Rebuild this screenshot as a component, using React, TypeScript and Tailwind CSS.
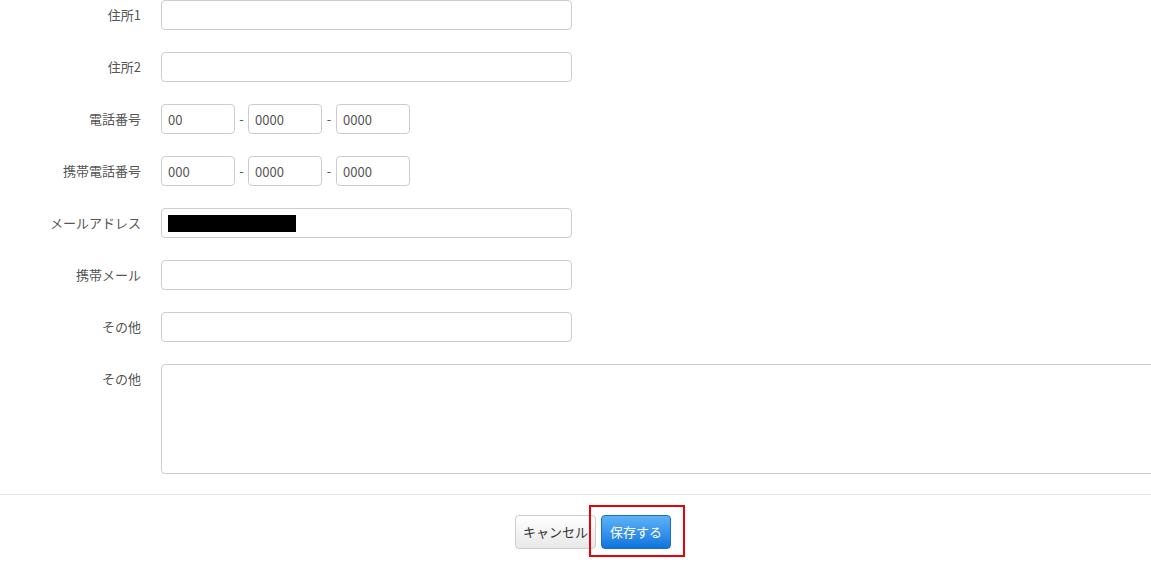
const FONT = { fontFamily: '"Noto Sans CJK JP", "Liberation Sans", sans-serif' };

const inputCls =
  "h-[30px] border border-[#ccc] rounded-[4px] bg-white px-[6px] text-[13px] text-[#555] outline-none";

function Row({ label, children, top }: { label: string; children: React.ReactNode; top?: boolean }) {
  return (
    <div className={"flex " + (top ? "items-start" : "items-center")}>
      <label className="w-[141px] h-[30px] flex items-center justify-end text-[13px] text-[#555] shrink-0">
        {label}
      </label>
      <div className="ml-[20px] flex items-center">{children}</div>
    </div>
  );
}

function Phone({ parts }: { parts: string[] }) {
  return (
    <>
      {parts.map((p, i) => (
        <div key={i} className="flex items-center">
          {i > 0 && (
            <span className={(i === 1 ? "w-[13px]" : "w-[14px]") + " text-center text-[13px] text-[#555]"}>-</span>
          )}
          <input defaultValue={p} className={inputCls + " w-[74px]"} />
        </div>
      ))}
    </>
  );
}

export default function App() {
  return (
    <div className="w-[1151px] h-[579px] overflow-hidden bg-white" style={FONT}>
      <div className="flex flex-col gap-[22px]">
        <Row label="住所1">
          <input className={inputCls + " w-[411px]"} />
        </Row>
        <Row label="住所2">
          <input className={inputCls + " w-[411px]"} />
        </Row>
        <Row label="電話番号">
          <Phone parts={["00", "0000", "0000"]} />
        </Row>
        <Row label="携帯電話番号">
          <Phone parts={["000", "0000", "0000"]} />
        </Row>
        <Row label="メールアドレス">
          <div className={inputCls + " w-[411px] flex items-center"}>
            <div className="w-[128px] h-[17px] bg-black" />
          </div>
        </Row>
        <Row label="携帯メール">
          <input className={inputCls + " w-[411px]"} />
        </Row>
        <Row label="その他">
          <input className={inputCls + " w-[411px]"} />
        </Row>
        <Row label="その他" top>
          <textarea className="h-[110px] w-[1010px] border border-[#ccc] rounded-[4px] bg-white resize-none outline-none" />
        </Row>
      </div>

      <div className="mt-[20px] border-t border-[#e5e5e5]" />

      <div className="flex justify-center pl-[35px] pt-[20px] gap-[5px]">
        <button className="h-[34px] w-[81px] rounded-[4px] border border-[#ccc] bg-linear-to-b from-white to-[#e8e8e8] text-[13px] text-[#333]">
          キャンセル
        </button>
        <div className="relative">
          <button className="h-[34px] w-[70px] rounded-[4px] border border-[#1a6fc9] bg-linear-to-b from-[#5db3f7] to-[#0a74dc] text-[13px] text-white">
            保存する
          </button>
          <div className="absolute left-[-12px] top-[-10px] w-[96px] h-[52px] border-2 border-[#e8000b] pointer-events-none" />
        </div>
      </div>
    </div>
  );
}
